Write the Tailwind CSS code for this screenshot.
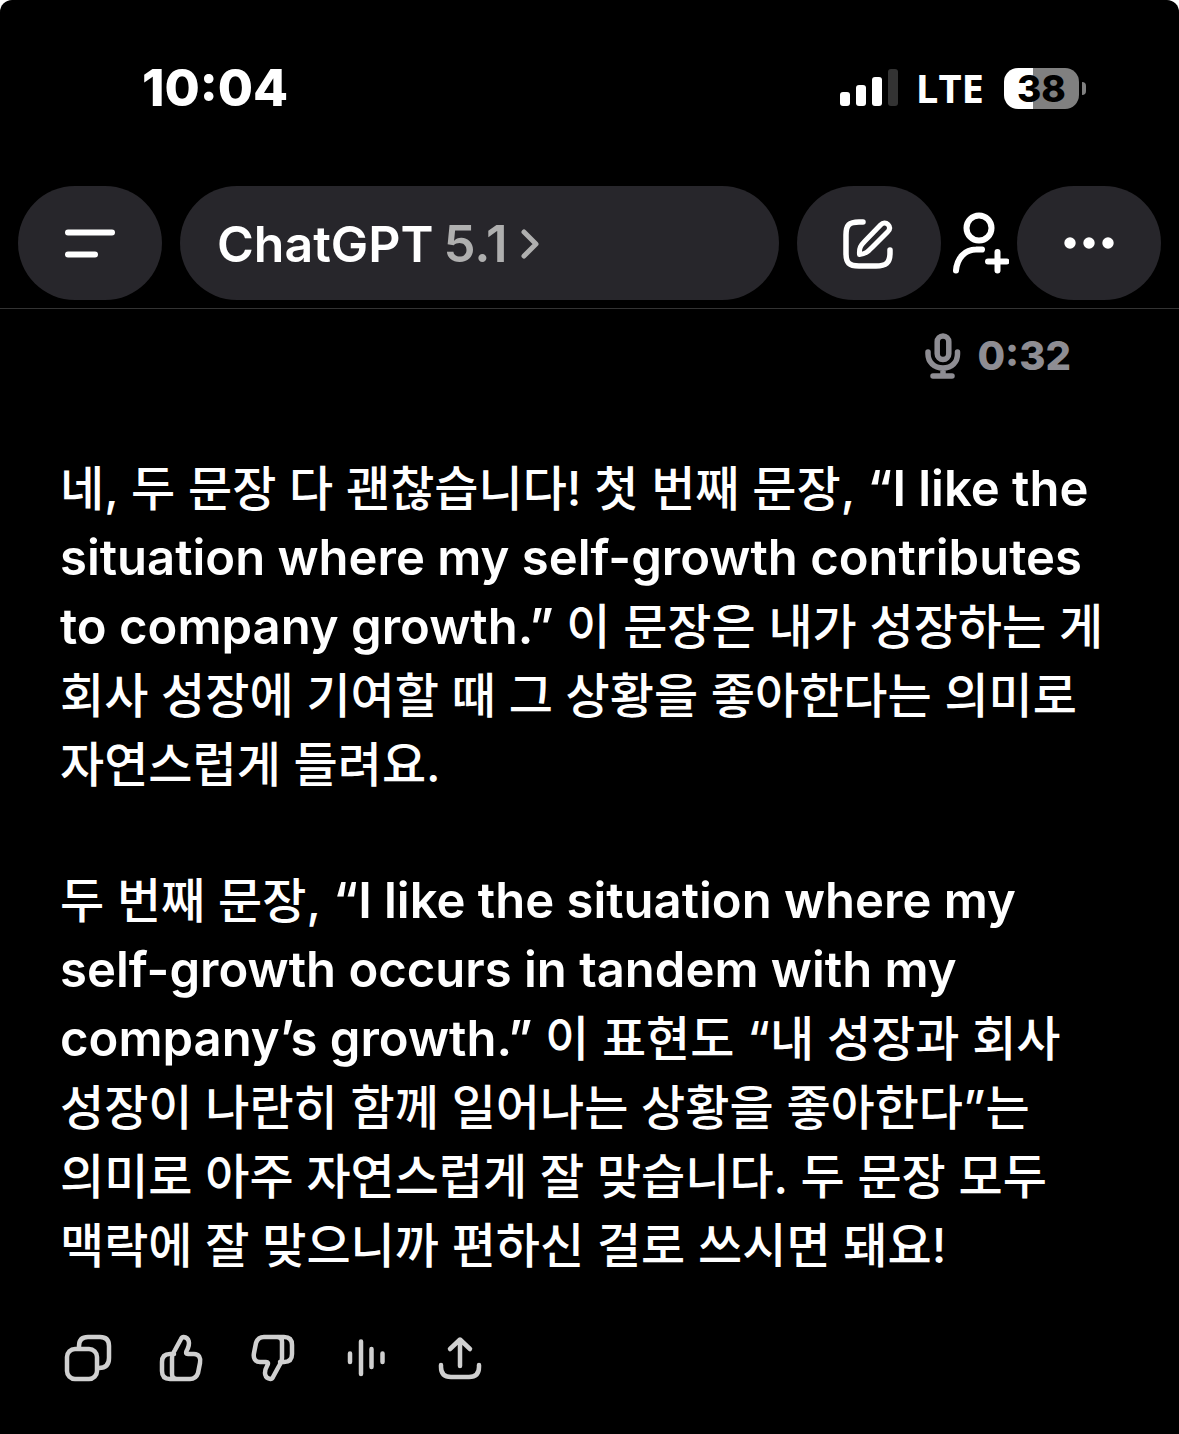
<!DOCTYPE html>
<html lang="ko">
<head>
<meta charset="utf-8">
<meta name="viewport" content="width=device-width, initial-scale=1">
<title>ChatGPT</title>
<script src="https://cdn.jsdelivr.net/npm/@tailwindcss/browser@4"></script>
</head>
<body class="bg-white font-['Inter','Noto_Sans_CJK_KR',sans-serif] text-white">
<div class="min-h-screen rounded-t-xl bg-black">

  <!-- Status bar -->
  <div class="flex h-[186px] items-start justify-between pr-[100px] pl-[142px] pt-[58px]">
    <time class="text-[51px] leading-[60px] font-extrabold">10:04</time>
    <div class="flex h-[60px] items-center">
      <svg class="h-[38px] w-[58px]" viewBox="0 0 58 38" fill="#fff" role="img" aria-label="Signal">
        <rect x="0" y="23" width="10" height="14" rx="3"/>
        <rect x="16" y="16" width="10" height="21" rx="3"/>
        <rect x="32" y="8" width="10" height="29" rx="3"/>
        <rect x="48" y="0" width="10" height="37" rx="3" fill="#333"/>
      </svg>
      <span class="ml-[18px] font-['Open_Sans','Noto_Sans',sans-serif] text-[40px] leading-[60px] font-bold">LTE</span>
      <div class="relative ml-5 flex h-[41px] w-[75px] items-center justify-center rounded-[14px] bg-[linear-gradient(90deg,#fff_29px,#808080_29px)] text-[37px] leading-[41px] font-extrabold text-black">38
        <span class="absolute top-[14px] -right-[7px] h-[13px] w-1 rounded-r-full bg-[#808080]"></span>
      </div>
    </div>
  </div>

  <!-- Conversation header -->
  <header class="flex h-[123px] items-start border-b border-[#333] px-[18px]">
    <button aria-label="Menu" class="flex h-[114px] w-36 shrink-0 items-center justify-center rounded-full bg-[#27262b]">
      <svg class="h-[50px] w-[50px]" viewBox="0 0 50 50" stroke="#fff" stroke-width="6" stroke-linecap="round"><path d="M3 14.500H47M3 36.500H30"/></svg>
    </button>
    <button class="mx-[18px] flex h-[114px] flex-1 items-center rounded-full bg-[#27262b] pt-0.5 pl-[37px] text-[50px] leading-[60px]">
      <span class="font-semibold">ChatGPT</span>
      <span class="ml-2.5 text-[51px] font-semibold text-[#afafaf]">5.1</span>
      <svg class="ml-3 h-[30px] w-5" viewBox="0 0 20 30" fill="none" stroke="#afafaf" stroke-width="5" stroke-linecap="round" stroke-linejoin="round"><path d="M4 3L16 15L4 27"/></svg>
    </button>
    <button aria-label="New chat" class="flex h-[114px] w-36 shrink-0 items-center justify-center rounded-full bg-[#27262b]">
      <svg class="h-[52px] w-[52px]" viewBox="1 -1 52 52" fill="none" stroke="#fff" stroke-width="5.500" stroke-linecap="round" stroke-linejoin="round">
        <path d="M21 4H17C7 4 4 7 4 17V35C4 45 7 48 17 48H34C44 48 48 45 48 35V32"/>
        <path d="M17.500 36.500C17 30 18.500 27.500 23 23L38.500 7C41 4.500 44 4.500 46 6.500C48.500 9 48 11.500 45.500 14L30 29.500C25.500 34 23.500 36 17.500 36.500Z" stroke-width="5"/>
      </svg>
    </button>
    <button aria-label="Add people" class="flex h-[114px] w-[76px] shrink-0 items-center justify-center">
      <svg class="h-[64px] w-[60px]" viewBox="0 0 60 64" fill="none" stroke="#fff" stroke-width="6" stroke-linecap="round">
        <circle cx="30" cy="17" r="12.500"/><path d="M7 59.500C8 47 16 38.500 27 38.500Q30 38.300 33 38.500M48.500 41V59.500M39 50.500H57.500"/>
      </svg>
    </button>
    <button aria-label="More" class="flex h-[114px] w-36 shrink-0 items-center justify-center rounded-full bg-[#27262b]">
      <svg class="h-3 w-[50px]" viewBox="0 0 50 12" fill="#fff"><circle cx="6" cy="6" r="5.700"/><circle cx="25" cy="6" r="5.700"/><circle cx="44" cy="6" r="5.700"/></svg>
    </button>
  </header>

  <main>
    <!-- Voice message length -->
    <div class="flex items-center justify-end gap-4 pt-6 pr-[108px] text-[#8e8d93]">
      <svg class="h-[46px] w-9" viewBox="0 0 36 46" fill="none" stroke="currentColor" stroke-width="5.500" stroke-linecap="round" aria-hidden="true">
        <rect x="12.200" y="3" width="11.600" height="23.500" rx="5.800"/><path d="M3 19V21C3 29 9 35 18 35S32.500 29 32.500 21V19M18 35V42M8 43H27"/>
      </svg>
      <span class="text-[40px] leading-[46px] font-extrabold">0:32</span>
    </div>

    <!-- Assistant reply -->
    <article lang="en" class="mt-[75px] space-y-[67px] pl-[60px] text-[49px] leading-[69px] font-semibold whitespace-nowrap [&_span]:text-[48px] [&_span]:font-medium">
      <p><span lang="ko">네, 두 문장 다 괜찮습니다! 첫 번째 문장,</span> “I like the<br>
      situation where my self-growth contributes<br>
      to company growth.” <span lang="ko">이 문장은 내가 성장하는 게<br>
      회사 성장에 기여할 때 그 상황을 좋아한다는 의미로<br>
      자연스럽게 들려요.</span></p>
      <p><span lang="ko">두 번째 문장,</span> “I like the situation where my<br>
      self-growth occurs in tandem with my<br>
      company’s growth.” <span lang="ko">이 표현도 “내 성장과 회사<br>
      성장이 나란히 함께 일어나는 상황을 좋아한다”는<br>
      의미로 아주 자연스럽게 잘 맞습니다. 두 문장 모두<br>
      맥락에 잘 맞으니까 편하신 걸로 쓰시면 돼요!</span></p>
    </article>

    <!-- Reply actions -->
    <div class="mt-[54px] flex gap-[45px] pb-[44px] pl-16 text-[#d0d0d0] [&_svg]:size-12 [&_svg]:fill-none [&_svg]:stroke-current [&_svg]:stroke-[4.500px]">
      <button aria-label="Copy"><svg viewBox="0 0 48 48" stroke-linecap="round" stroke-linejoin="round"><rect x="3" y="15" width="30" height="30" rx="8"/><path d="M15 14V12C15 6 18 3 24 3H36C42 3 45 6 45 12V24C45 30 42 34 35 34"/></svg></button>
      <button aria-label="Good response"><svg viewBox="0 0 48 48" stroke-linecap="round" stroke-linejoin="round"><path d="M15 24V40Q15 45 20 45H33Q39 45 41 39L43 29C44 24 42 20 37 20H31C29 20 28.500 19 29.500 17C34 9 32 3.500 26.500 3C25 3 24.500 4 24 5L18 16Q15 20 15 24ZM17 20H13Q5 20 5 28V37Q5 45 13 45H19"/></svg></button>
      <button aria-label="Bad response"><svg viewBox="0 0 48 48" stroke-linecap="round" stroke-linejoin="round"><path d="M32 24V8Q32 3 27 3H14Q8 3 6 9L4 19C3 24 5 28 10 28H16C18 28 18.500 29 17.500 31C13 39 15 44.500 20.500 45C22 45 22.500 44 23 43L29 32Q32 28 32 24ZM30 28H34Q42 28 42 20V11Q42 3 34 3H28"/></svg></button>
      <button aria-label="Read aloud"><svg viewBox="0 0 48 48" stroke-linecap="round"><path d="M7 19.500V28M18 7.500V40M28.500 15V33M39.500 19.500V28"/></svg></button>
      <button aria-label="Share"><svg viewBox="0 0 48 48" stroke-linecap="round" stroke-linejoin="round"><path d="M24 32V6M14 15L24 5.500L34 15M5 31V33Q5 43 15 43H33Q43 43 43 33V31"/></svg></button>
    </div>
  </main>
</div>
</body>
</html>
